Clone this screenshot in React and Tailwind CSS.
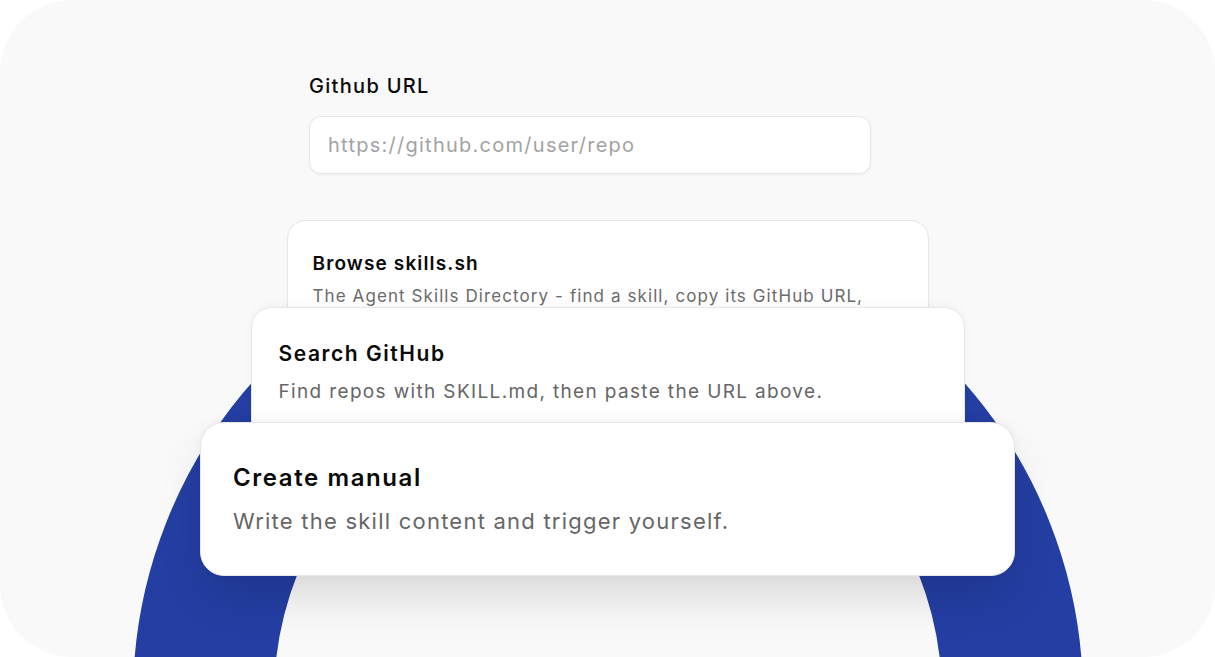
import React from 'react';

const font = { fontFamily: 'Inter, "Noto Sans", sans-serif' };

const Ring = () => (
  <svg className="absolute inset-0 pointer-events-none" width="1215" height="657" viewBox="0 0 1215 657">
    <circle cx="608" cy="697" r="404.5" fill="none" stroke="#243ea3" strokeWidth="141" />
  </svg>
);

const App = () => {
  return (
    <div className="w-[1215px] h-[657px] bg-white" style={font}>
      <div className="relative w-full h-full rounded-[72px] bg-[#f9f9f9] overflow-hidden">
        <Ring />
        <div className="relative flex flex-col items-center pt-[72px]">
          <div className="self-start ml-[309px] w-[562px]">
            <label className="block text-[20px] leading-[28px] font-medium text-[#0a0a0a] tracking-[0.065em]">
              Github URL
            </label>
            <input
              type="text"
              placeholder="https://github.com/user/repo"
              className="mt-[16px] w-full h-[58px] rounded-[12px] border border-[#e6e6e6] bg-white px-[18px] text-[20px] tracking-[0.063em] text-[#0a0a0a] placeholder:text-[#a3a3a3] shadow-[0_1px_3px_rgba(0,0,0,0.05)] outline-none"
            />
          </div>

          {/* stacked option cards */}
          <div className="relative z-10 mt-[46px] w-[642px] h-[121px] rounded-[19px] border border-[#e8e8e8] bg-white pl-[25px] pt-[30px] overflow-hidden shadow-[0_2px_6px_rgba(0,0,0,0.03)]">
            <h3 className="text-[19px] leading-[25px] font-semibold text-[#0a0a0a] tracking-[0.06em]">Browse skills.sh</h3>
            <p className="mt-[9px] text-[17px] leading-[23px] text-[#6b6b6b] whitespace-nowrap tracking-[0.064em]">
              The Agent Skills Directory - find a skill, copy its GitHub URL,
            </p>
          </div>

          <div className="relative z-20 mt-[-34px] w-[714px] h-[135px] rounded-[21px] border border-[#e8e8e8] bg-white pl-[27px] pt-[32px] shadow-[0_-2px_8px_rgba(0,0,0,0.04)]">
            <h3 className="text-[21px] leading-[28px] font-semibold text-[#0a0a0a] tracking-[0.074em]">Search GitHub</h3>
            <p className="mt-[11px] text-[19px] leading-[26px] text-[#666666] tracking-[0.071em]">
              Find repos with SKILL.md, then paste the URL above.
            </p>
          </div>

          <div className="relative z-30 mt-[-20px] w-[815px] h-[154px] rounded-[24px] border border-[#e6e6e6] bg-white pl-[32px] pt-[39px] shadow-[0_24px_48px_-6px_rgba(0,0,0,0.14),0_-2px_8px_rgba(0,0,0,0.04)]">
            <h3 className="text-[24px] leading-[32px] font-semibold text-[#0a0a0a] tracking-[0.066em]">Create manual</h3>
            <p className="mt-[12px] text-[22px] leading-[30px] text-[#666666] tracking-[0.056em]">
              Write the skill content and trigger yourself.
            </p>
          </div>
        </div>
      </div>
    </div>
  );
};

export default App;
